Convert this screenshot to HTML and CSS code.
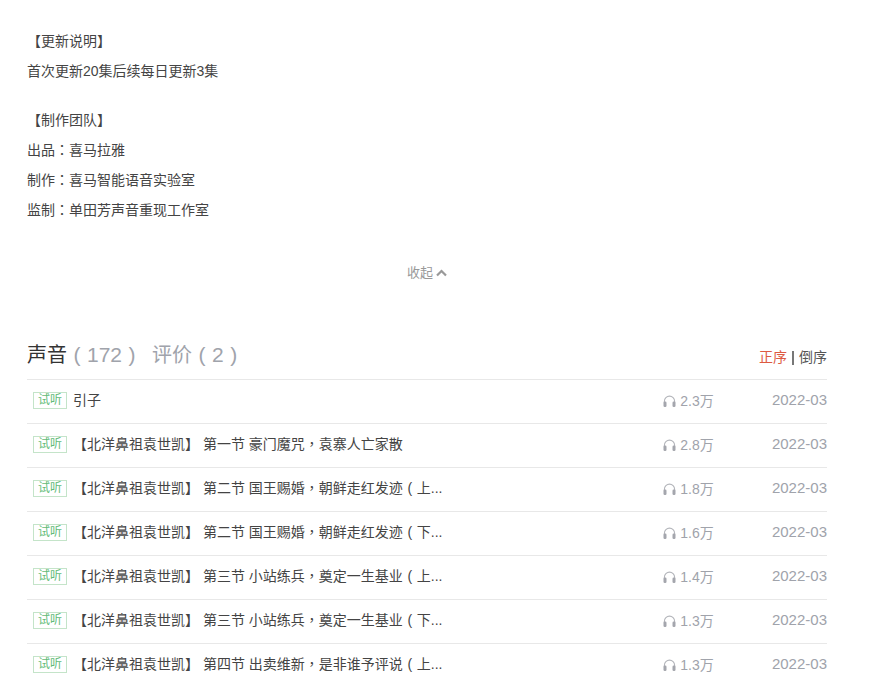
FILE: index.html
```html
<!DOCTYPE html>
<html lang="zh-CN">
<head>
<meta charset="utf-8">
<title>声音</title>
<link rel="stylesheet" href="styles.css">
</head>
<body>
<svg class="defs" width="0" height="0"><symbol id="hp" viewBox="0 0 13 12"><path d="M1.4 8.5V6.2a5.1 5.1 0 0 1 10.2 0V8.500" fill="none" stroke="#b4b6bb" stroke-width="1.1"/><rect x="0.500" y="6.500" width="3" height="5.500" rx="1.200" fill="#a4a6ad"/><rect x="9.500" y="6.500" width="3" height="5.500" rx="1.200" fill="#a4a6ad"/></symbol></svg>
<main class="page">
  <section class="intro">
    <p class="line">【更新说明】</p>
    <p class="line">首次更新20集后续每日更新3集</p>
    <p class="line gap">【制作团队】</p>
    <p class="line">出品<span class="p" lang="zh-TW">：</span>喜马拉雅</p>
    <p class="line">制作<span class="p" lang="zh-TW">：</span>喜马智能语音实验室</p>
    <p class="line">监制<span class="p" lang="zh-TW">：</span>单田芳声音重现工作室</p>
  </section>
  <div class="fold">收起<svg class="chev" width="11" height="8" viewBox="0 0 11 8"><path d="M1 6.500 5.500 2 10 6.500" fill="none" stroke="#999" stroke-width="2.200"/></svg></div>
  <header class="head">
    <h2 class="tabs"><span class="on">声音</span><span class="cnt"><span class="b">(</span>172<span class="b">)</span></span><span class="tab2">评价</span><span class="cnt"><span class="b">(</span>2<span class="b">)</span></span></h2>
    <div class="sort"><span class="asc">正序</span><span class="sep"></span><span>倒序</span></div>
  </header>
  <ul class="list">
    <li class="row"><span class="tag">试听</span><span class="name first">引子</span><span class="plays"><svg class="hp" width="13" height="12"><use href="#hp"/></svg>2.3万</span><span class="date">2022-03</span></li>
    <li class="row"><span class="tag">试听</span><span class="name">【北洋鼻祖袁世凯】 第一节 豪门魔咒<span class="p" lang="zh-TW">，</span>袁寨人亡家散</span><span class="plays"><svg class="hp" width="13" height="12"><use href="#hp"/></svg>2.8万</span><span class="date">2022-03</span></li>
    <li class="row"><span class="tag">试听</span><span class="name">【北洋鼻祖袁世凯】 第二节 国王赐婚<span class="p" lang="zh-TW">，</span>朝鲜走红发迹<span class="b">(</span>上...</span><span class="plays"><svg class="hp" width="13" height="12"><use href="#hp"/></svg>1.8万</span><span class="date">2022-03</span></li>
    <li class="row"><span class="tag">试听</span><span class="name">【北洋鼻祖袁世凯】 第二节 国王赐婚<span class="p" lang="zh-TW">，</span>朝鲜走红发迹<span class="b">(</span>下...</span><span class="plays"><svg class="hp" width="13" height="12"><use href="#hp"/></svg>1.6万</span><span class="date">2022-03</span></li>
    <li class="row"><span class="tag">试听</span><span class="name">【北洋鼻祖袁世凯】 第三节 小站练兵<span class="p" lang="zh-TW">，</span>奠定一生基业<span class="b">(</span>上...</span><span class="plays"><svg class="hp" width="13" height="12"><use href="#hp"/></svg>1.4万</span><span class="date">2022-03</span></li>
    <li class="row"><span class="tag">试听</span><span class="name">【北洋鼻祖袁世凯】 第三节 小站练兵<span class="p" lang="zh-TW">，</span>奠定一生基业<span class="b">(</span>下...</span><span class="plays"><svg class="hp" width="13" height="12"><use href="#hp"/></svg>1.3万</span><span class="date">2022-03</span></li>
    <li class="row"><span class="tag">试听</span><span class="name">【北洋鼻祖袁世凯】 第四节 出卖维新<span class="p" lang="zh-TW">，</span>是非谁予评说<span class="b">(</span>上...</span><span class="plays"><svg class="hp" width="13" height="12"><use href="#hp"/></svg>1.3万</span><span class="date">2022-03</span></li>
  </ul>
</main>
</body>
</html>
```
FILE: styles.css
```css
html, body { margin: 0; padding: 0; background: #fff; height: 678px; overflow: hidden; }
body { font-family: "Liberation Sans", "Noto Sans CJK SC", sans-serif; color: #333; font-size: 14px; }
.defs { position: absolute; }
.p { font-family: "Noto Sans CJK TC", sans-serif; line-height: 1; }
.b { display: inline-block; width: 1em; text-align: center; }
.page { width: 800px; margin-left: 27px; padding-top: 26px; }
.line { margin: 0; height: 30px; line-height: 30px; font-size: 14px; color: #444; }
.gap { margin-top: 19px; }
.fold { margin-top: 33px; height: 30px; line-height: 30px; font-size: 13px; color: #999; display: flex; justify-content: center; align-items: center; gap: 3px; }
.head { margin-top: 41px; height: 50px; display: flex; justify-content: space-between; align-items: center; }
.tabs { margin: 0; font-size: 20px; font-weight: 400; display: flex; align-items: baseline; color: #333; padding-bottom: 2px; }
.cnt, .tab2 { color: #a0a3ab; }
.cnt { margin-right: 10px; font-size: 21px; }
.cnt .b { width: 20px; }
.sort { font-size: 14px; color: #555; display: flex; align-items: center; padding-top: 4px; }
.asc { color: #dd5a42; }
.sep { width: 2px; height: 14px; background: #777; margin: 4px 5px 0; }
.list { margin: 0; padding: 0; list-style: none; border-top: 1px solid #e8e8e8; }
.row { height: 37px; padding-bottom: 6px; border-bottom: 1px solid #e8e8e8; display: flex; align-items: center; }
.tag { margin: 4px 0 0 6px; width: 32px; height: 15px; line-height: 15px; text-align: center; border: 1px solid #c4e4c9; color: #62bb78; font-size: 12px; flex: none; }
.name { width: 600px; font-size: 14px; color: #444; padding-left: 6px; box-sizing: border-box; }
.plays { margin-left: auto; width: 53px; color: #a0a3ab; font-size: 14px; display: flex; align-items: center; gap: 4px; padding-top: 3px; }
.hp { flex: none; margin: 2px 0 0 1px; }
.date { width: 113px; text-align: right; color: #a0a3ab; font-size: 15px; margin-top: 2px; }
```
